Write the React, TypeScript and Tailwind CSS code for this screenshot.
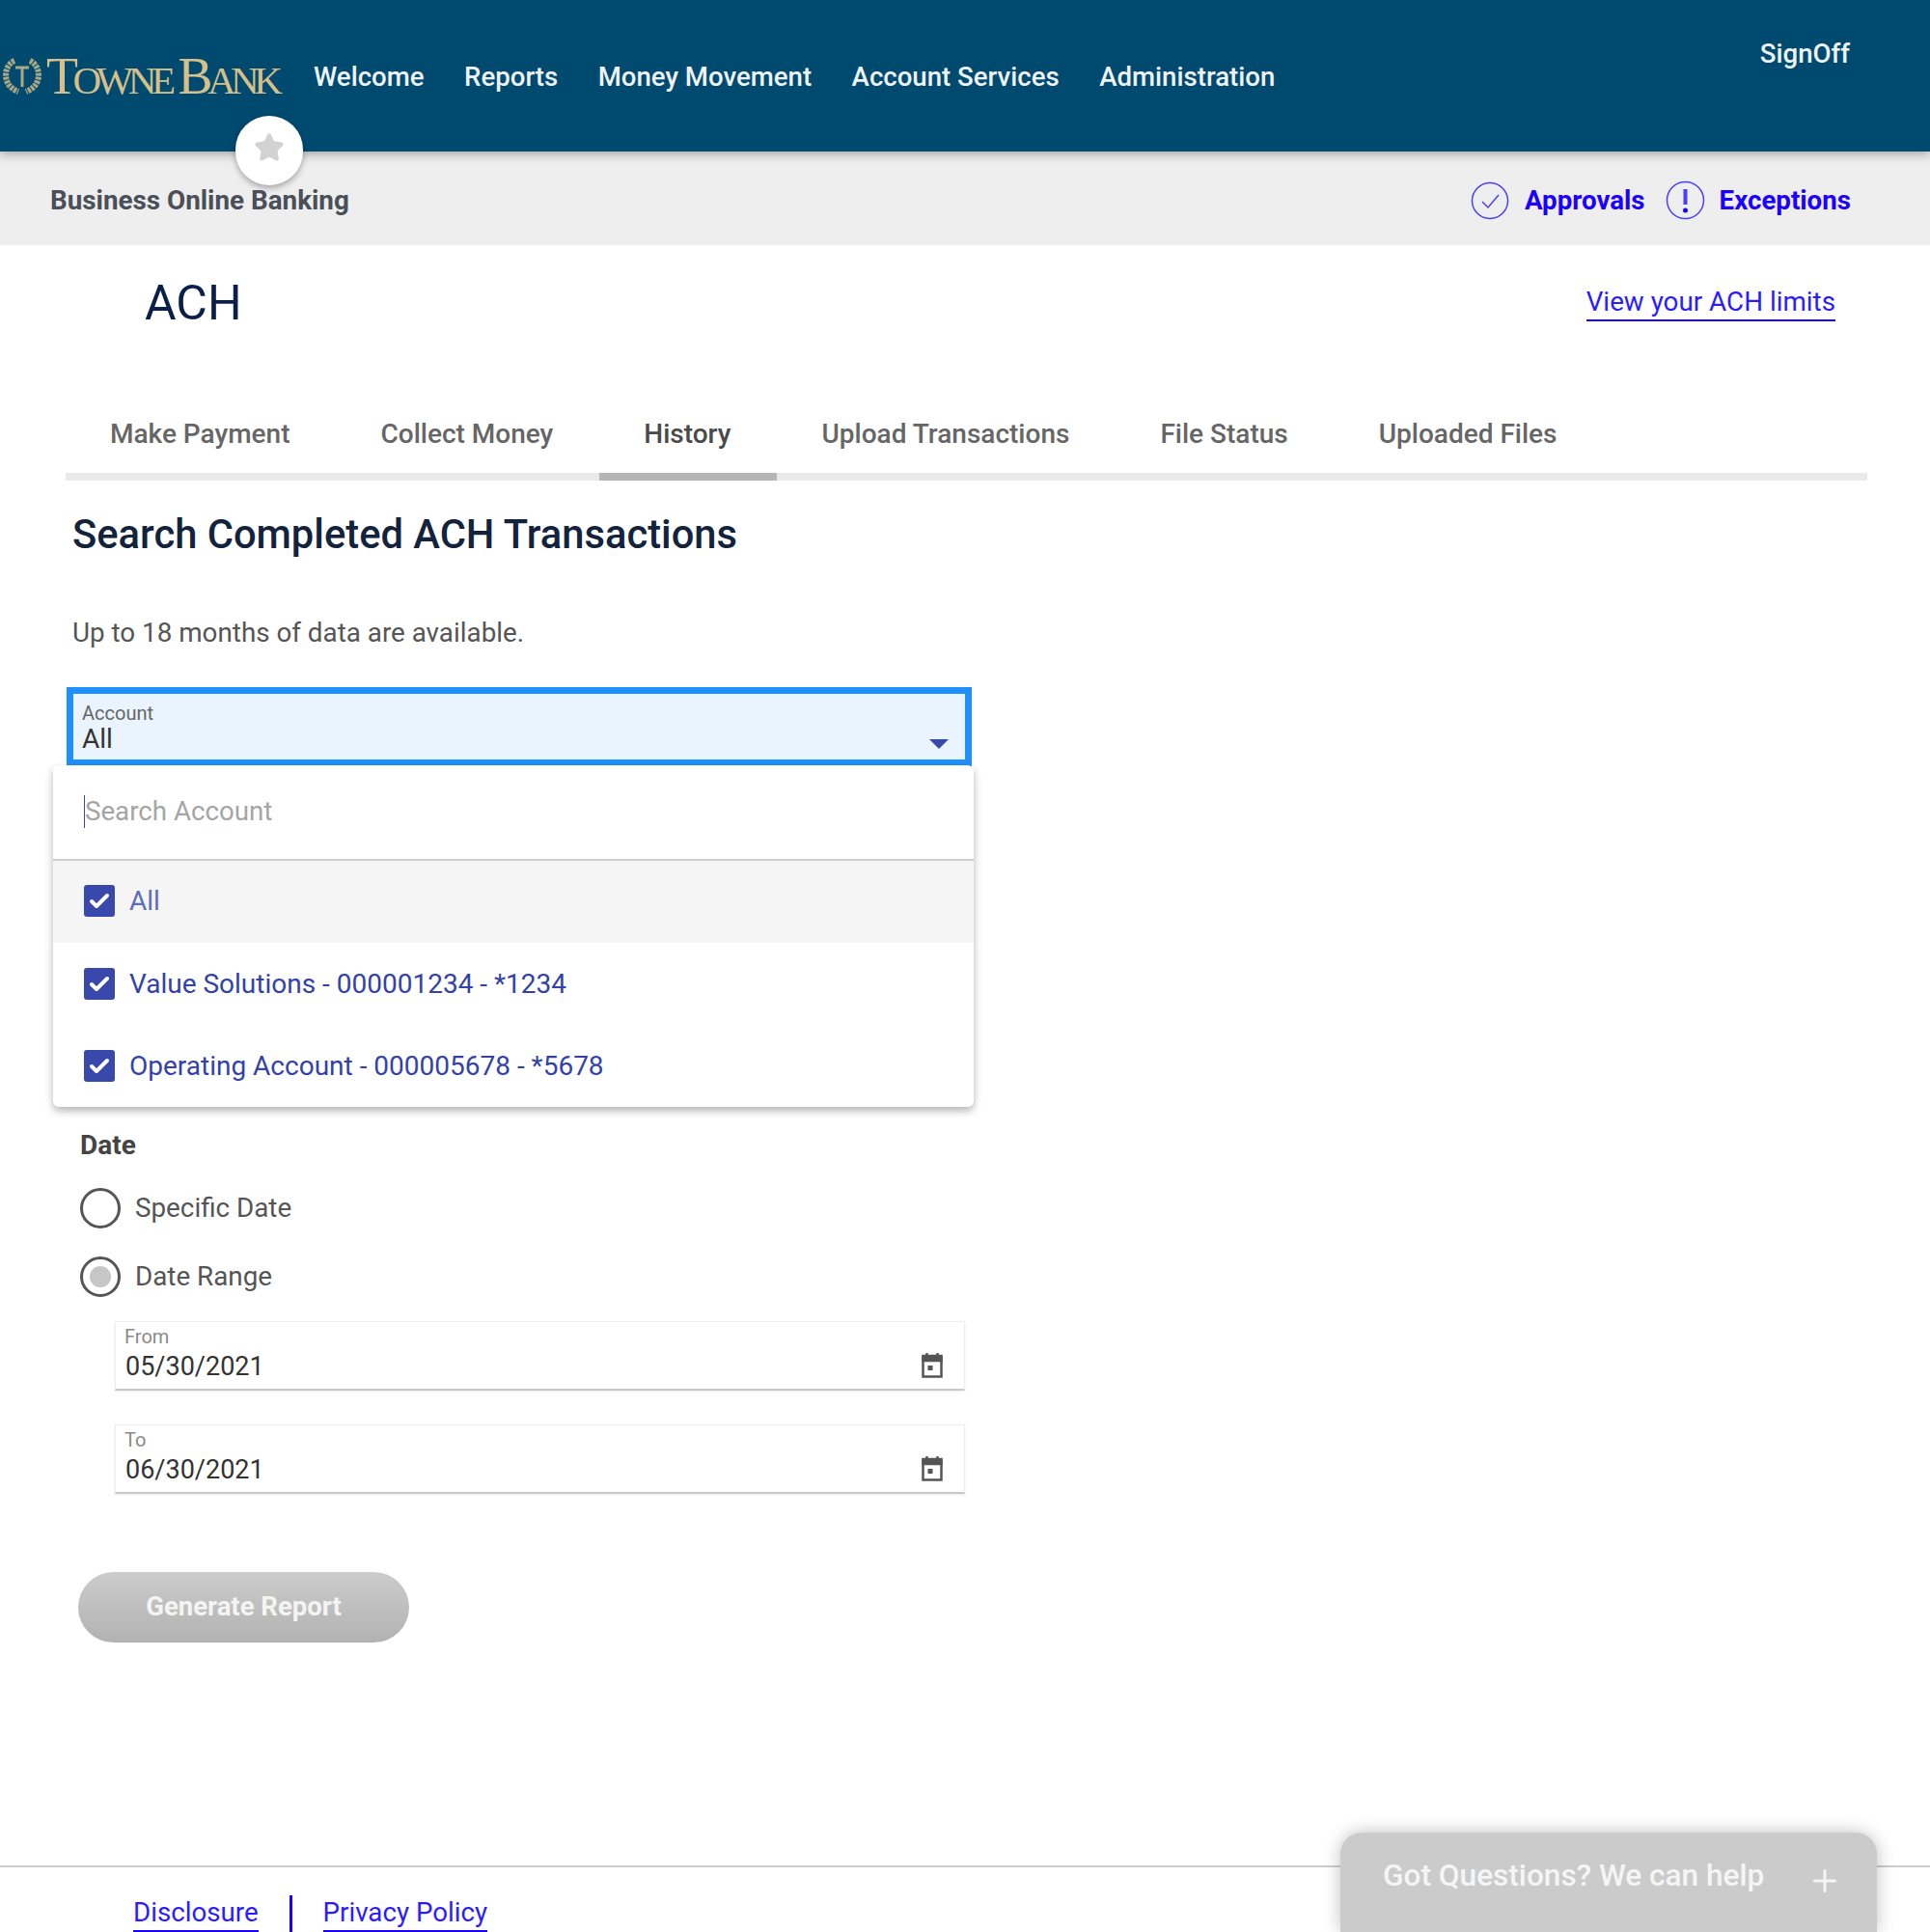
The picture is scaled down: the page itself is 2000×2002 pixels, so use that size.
import { Star, Check, Plus } from 'lucide-react';

const navItems = ['Welcome', 'Reports', 'Money Movement', 'Account Services', 'Administration'];
const tabs = ['Make Payment', 'Collect Money', 'History', 'Upload Transactions', 'File Status', 'Uploaded Files'];

function Logo() {
  return (
    <div className="flex items-center w-[325px] pl-[3px] shrink-0 text-[#d6bf88]">
      <svg width="40" height="38" viewBox="0 0 40 38" fill="none" stroke="currentColor" opacity="0.8">
        <path d="M12 3C3 7 1 18 5 26c2 4 6 7 11 9" strokeWidth="6" strokeDasharray="3 1" />
        <path d="M28 3c9 4 11 15 7 23-2 4-6 7-11 9" strokeWidth="6" strokeDasharray="3 1" />
        <path d="M13 10h14M20 10v20" strokeWidth="3" />
      </svg>
      <div className="ml-[5px] flex items-baseline font-['Liberation_Serif',serif] leading-none tracking-[-5.5px]">
        <span className="text-[54px]">T</span>
        <span className="text-[41px]">OWNE</span>
        <span className="text-[54px] ml-[8px]">B</span>
        <span className="text-[41px]">ANK</span>
      </div>
    </div>
  );
}

function CheckBox() {
  return (
    <span className="flex items-center justify-center w-[32px] h-[33px] rounded-[3px] bg-[#3949ab]">
      <Check className="w-[24px] h-[24px] text-white" strokeWidth={4} />
    </span>
  );
}

function DateField({ label, value }: { label: string; value: string }) {
  return (
    <div className="relative ml-[36px] w-[881px] h-[72px] border border-[#eeeeee] border-b-2 border-b-[#c8c8c8] pl-[9px] pt-[4px] shadow-[0_1px_2px_rgba(0,0,0,0.08)]">
      <div className="text-[20px] leading-[22px] text-[#8a8a8a]">{label}</div>
      <div className="mt-[4px] pl-[1px] text-[27px] leading-[32px] text-[#333333]">{value}</div>
      <svg className="absolute right-[22px] top-[32px]" width="22" height="26" viewBox="0 0 22 26" fill="none">
        <path d="M1.5 4.5h19v20h-19z" stroke="#555" strokeWidth="2.5" />
        <path d="M1.5 3h19v5h-19zM5.5 0v4M16.5 0v4" fill="#555" stroke="#555" strokeWidth="2.5" />
        <rect x="6.5" y="13" width="5" height="5" fill="#555" />
      </svg>
    </div>
  );
}

function Radio({ label, checked }: { label: string; checked?: boolean }) {
  return (
    <div className="flex items-center gap-[15px] h-[42px]">
      <span className="flex items-center justify-center w-[42px] h-[42px] rounded-full border-[3px] border-[#555555]">
        {checked && <span className="w-[22px] h-[22px] rounded-full bg-[#c6c6c6]" />}
      </span>
      <span className="text-[27.8px] text-[#555555]">{label}</span>
    </div>
  );
}

export default function App() {
  return (
    <div className="relative h-[2002px] w-[2000px] overflow-hidden bg-white font-['Roboto',sans-serif]">
      <header className="relative z-10 flex h-[157px] bg-[#00496f] shadow-[0_3px_10px_rgba(0,0,0,0.3)]">
        <div className="flex items-center h-[157px]">
          <Logo />
          <nav className="mt-[2px] flex gap-[41.5px] text-[27.6px] font-medium text-[#eef3f6]">
            {navItems.map((item) => (
              <span key={item}>{item}</span>
            ))}
          </nav>
        </div>
        <span className="ml-auto mr-[83px] mt-[35px] h-[38px] text-[27.6px] font-medium text-[#eef3f6]">SignOff</span>
        <div className="absolute left-[244px] top-[120px] flex items-center justify-center w-[70px] h-[72px] pb-[6px] rounded-full bg-white shadow-[0_3px_6px_rgba(0,0,0,0.3)]">
          <Star className="w-[32px] h-[32px] text-[#d2d2d2] fill-[#d2d2d2]" />
        </div>
      </header>

      <div className="flex items-center justify-between h-[97px] bg-[#eeeeee] pl-[52px] pr-[82px] pt-[5px]">
        <span className="text-[27.8px] font-bold text-[#4b4f58]">Business Online Banking</span>
        <div className="flex items-center text-[27.7px] font-bold text-[#1c00ff]">
          <svg width="40" height="40" viewBox="0 0 40 40" fill="none" stroke="#4a3dff" strokeWidth="1.5">
            <circle cx="20" cy="20" r="18.5" />
            <path d="M12 21l6 6 11-13" />
          </svg>
          <span className="ml-[16px]">Approvals</span>
          <svg className="ml-[21px]" width="41" height="41" viewBox="0 0 41 41" fill="none" stroke="#4a3dff" strokeWidth="1.5">
            <circle cx="20.5" cy="20.5" r="19" />
            <path d="M20.5 9v16" strokeWidth="4" />
            <circle cx="20.5" cy="31" r="2.5" fill="#1c00ff" stroke="none" />
          </svg>
          <span className="ml-[15px]">Exceptions</span>
        </div>
      </div>

      <div className="flex items-center justify-between h-[120px] pl-[150px] pr-[98px]">
        <h1 className="text-[50px] font-normal text-[#0b1f4b]">ACH</h1>
        <a className="border-b-2 border-[#1c00ff] text-[27.8px] leading-[36px] text-[#2a1cff]">View your ACH limits</a>
      </div>

      <div className="ml-[68px] mt-[52px] flex w-[1867px] h-[72px] border-b-8 border-[#eaeaea]">
        {tabs.map((tab) => (
          <div
            key={tab}
            className={`-mb-2 flex h-[72px] items-start pl-[46px] pr-[48px] pt-[3px] text-[28px] font-medium ${
              tab === 'History' ? 'border-b-8 border-[#b5b5b5] text-[#4a4a4a]' : 'text-[#666666]'
            }`}
          >
            {tab}
          </div>
        ))}
      </div>

      <h2 className="ml-[75px] mt-[28px] text-[41.7px] leading-[56px] font-medium text-[#14233c]">
        Search Completed ACH Transactions
      </h2>
      <p className="ml-[75px] mt-[54px] text-[27.8px] leading-[40px] text-[#555555]">Up to 18 months of data are available.</p>

      <div className="relative ml-[69px] mt-[36px] w-[938px] h-[82px] border-[7px] border-[#1e90ff] bg-[#e9f4ff] pl-[9px] pt-[9px]">
        <div className="text-[20px] leading-[22px] text-[#666666]">Account</div>
        <div className="text-[28px] leading-[32px] text-[#333333]">All</div>
        <span className="absolute right-[17px] top-[47px] border-x-[10px] border-t-[10px] border-x-transparent border-t-[#3949ab]" />
        <div className="absolute left-[-21px] top-[74px] z-10 w-[954px] h-[354px] rounded-[6px] bg-white shadow-[0_4px_8px_rgba(0,0,0,0.3)] overflow-hidden">
          <div className="flex items-center h-[99px] border-b-2 border-[#cfcfcf] pl-[32px] pb-[2px] text-[27.7px] text-[#a5a5a5]">
            <span className="w-px h-[34px] bg-[#3949ab]" />
            Search Account
          </div>
          <div className="flex items-center gap-[15px] h-[85px] bg-[#f5f5f5] pl-[32px] pb-[2px] text-[28px] text-[#5c6bc0]">
            <CheckBox />
            All
          </div>
          <div className="flex items-center gap-[15px] h-[85px] pl-[32px] text-[28px] text-[#3342a8]">
            <CheckBox />
            Value Solutions - 000001234 - *1234
          </div>
          <div className="flex items-center gap-[15px] h-[85px] pl-[32px] text-[28px] text-[#3342a8]">
            <CheckBox />
            Operating Account - 000005678 - *5678
          </div>
        </div>
      </div>

      <div className="ml-[83px] mt-[373px] flex flex-col w-[940px]">
        <div className="text-[28px] leading-[40px] font-bold text-[#444444]">Date</div>
        <div className="mt-[24px] flex flex-col gap-[29px]">
          <Radio label="Specific Date" />
          <Radio label="Date Range" checked />
        </div>
        <div className="mt-[25px] flex flex-col gap-[35px]">
          <DateField label="From" value="05/30/2021" />
          <DateField label="To" value="06/30/2021" />
        </div>
        <button className="mt-[81px] -ml-[2px] w-[343px] h-[73px] pb-[2px] rounded-full bg-gradient-to-b from-[#cccccc] to-[#b2b2b2] text-[27.5px] font-bold text-[#f4f4f4]">
          Generate Report
        </button>
      </div>

      <footer className="mt-[231px] border-t-2 border-[#cccccc] flex items-start pl-[138px] pt-[29px] text-[27.7px] text-[#2a1cff]">
        <a className="border-b-2 border-[#1c00ff] leading-[36px]">Disclosure</a>
        <span className="mx-[32px] w-[3px] h-[40px] bg-[#1c00ff]" />
        <a className="border-b-2 border-[#1c00ff] leading-[36px]">Privacy Policy</a>
      </footer>

      <div className="absolute left-[1389px] top-[1899px] w-[556px] h-[103px] rounded-t-[22px] bg-[#cbcbcb] shadow-[0_0_18px_rgba(0,0,0,0.25)] flex items-start pl-[44px] pt-[21px] text-[31.6px] font-medium text-[#f5f5f5]">
        <span>Got Questions? We can help</span>
        <Plus className="absolute left-[484px] top-[32px] w-[36px] h-[36px]" strokeWidth={2} />
      </div>
    </div>
  );
}
